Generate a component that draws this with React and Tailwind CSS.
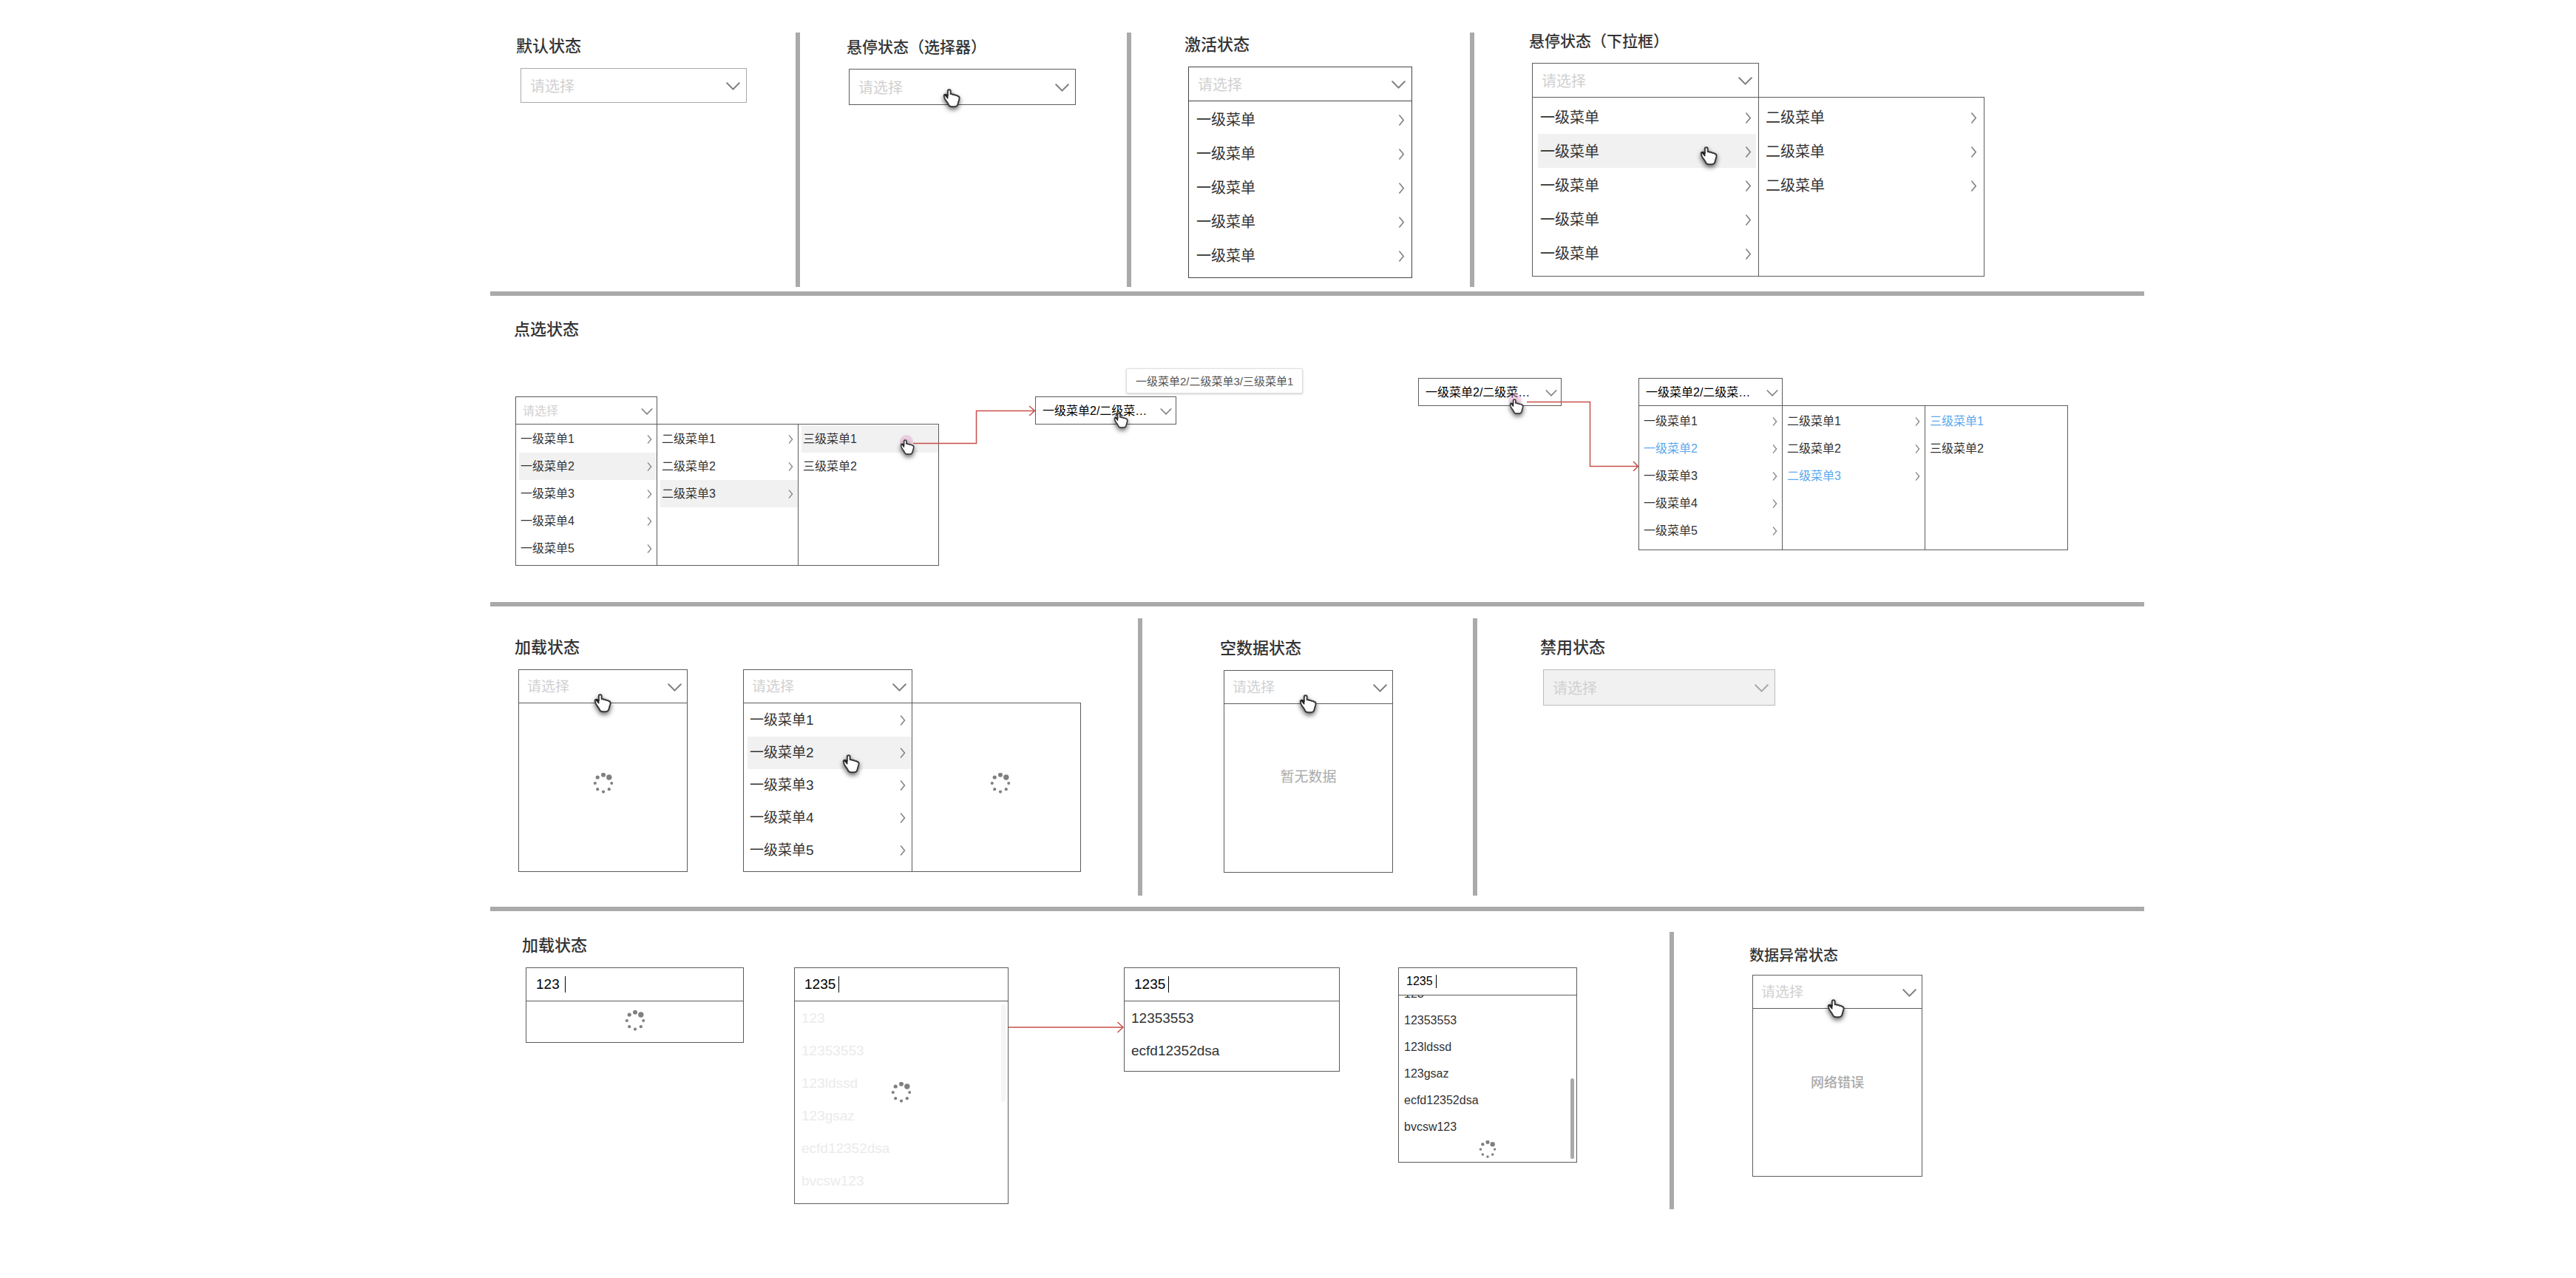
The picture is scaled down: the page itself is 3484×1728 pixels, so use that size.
import React from "react";

const SIZES = {
  lg: {
    trigger: "pt-[2px] pl-3 pr-2 text-[20px]",
    chevron: "w-[19px] h-[11px]",
    item: "h-[46px] ml-[7px] mr-[3px] pt-[2px] pl-[3px] pr-[6px] text-[20px]",
    arrow: "w-[9px] h-[15px]",
    hand: "w-[24px] h-[30px]",
  },
  md: {
    trigger: "pt-[2px] pl-[11px] pr-[7px] text-[19px]",
    chevron: "w-[19px] h-[11px]",
    item: "h-[44px] ml-[5px] pl-[3px] pr-2 text-[19px]",
    arrow: "w-[8px] h-[14px]",
    hand: "w-[24px] h-[30px]",
  },
  sm: {
    trigger: "pt-[2px] pl-[9px] pr-[5px] text-[16px]",
    chevron: "w-[16px] h-[9px]",
    item: "h-[37px] ml-[4px] pl-[2px] pr-[6px] text-[16px]",
    arrow: "w-[7px] h-[12px]",
    hand: "w-[20px] h-[25px]",
  },
};

function Chevron({ className }) {
  return (
    <svg viewBox="0 0 19 11" className={`shrink-0 ${className}`} fill="none" stroke="currentColor" strokeWidth="2" strokeLinecap="round" aria-hidden="true">
      <path d="M1.2 1.2 9.5 9.6 17.8 1.2" />
    </svg>
  );
}

function Arrow({ className }) {
  return (
    <svg viewBox="0 0 8 14" className={`shrink-0 text-[#808080] ${className}`} fill="none" stroke="currentColor" strokeWidth="1.5" strokeLinecap="round" aria-hidden="true">
      <path d="M1.500 1 6.500 7 1.500 13" />
    </svg>
  );
}

function Hand({ size = "lg", className }) {
  return (
    <svg viewBox="0 0 24 30" className={`pointer-events-none absolute z-10 overflow-visible drop-shadow-[0_3px_3px_rgba(0,0,0,0.6)] ${SIZES[size].hand} ${className}`} aria-hidden="true">
      <path
        d="M6.800 9V3.400C6.800 2 7.600 1.200 8.700 1.200s2 .8 2 2.200v3.800c1.200-.3 2.300 0 2.900.8 1.300-.3 2.500 0 3.200.8 1.300-.2 2.500.1 3.300.9 1.600.4 2.600 1.300 2.500 3-.1 2.200-1.300 4.300-1.800 7-.4 2.900-1.900 4.500-4.800 4.500h-3.400c-2.700 0-4.300-1.200-5-3.300-.8-2.300-3.400-4.500-4.700-7.300-.9-2-1.700-3.800-1-5 .9-1.400 3.300-1.200 4.900.4z"
        fill="#fff"
        stroke="#3a3a3a"
        strokeWidth="2"
        strokeLinejoin="round"
      />
      <path d="M2.800 8.400 6.800 8.600V13C5.600 11.400 4.400 9.600 2.800 8.400z" fill="#222" stroke="#222" strokeWidth="1.200" strokeLinejoin="round" />
    </svg>
  );
}

const DOTS = [
  [14, 2.7, 3],
  [21.8, 6, 3.7],
  [25.2, 14, 2],
  [21.8, 22.2, 2.1],
  [14, 25.6, 2.1],
  [6.2, 22.2, 2.1],
  [2.8, 14, 2.1],
  [6.2, 6, 2.6],
];

function Spinner({ className = "w-[28px] h-[28px]" }) {
  return (
    <svg viewBox="0 0 28 28" className={`shrink-0 ${className}`} fill="#808080" role="img" aria-label="加载中">
      {DOTS.map(([x, y, r]) => (
        <circle key={`${x}-${y}`} cx={x} cy={y} r={r} />
      ))}
    </svg>
  );
}

function TapDot({ className }) {
  return <span className={`pointer-events-none absolute size-[18px] rounded-full bg-[#e08fc0]/35 ${className}`} />;
}

function Title({ className = "mb-[18px] text-[22px]", children }) {
  return <h2 className={`mt-px leading-[22px] font-medium whitespace-nowrap text-[#333] ${className}`}>{children}</h2>;
}

function Trigger({ size = "lg", value, className, disabled, tone = "border-[#5c5c5c]" }) {
  const s = SIZES[size];
  return (
    <button
      type="button"
      disabled={disabled}
      aria-haspopup="listbox"
      className={`flex items-center justify-between border whitespace-nowrap ${tone} ${s.trigger} ${value ? "text-black" : "text-[#d0d0d0]"} ${disabled ? "bg-[#f1f1f1]" : "bg-white"} ${className}`}
    >
      <span>{value || "请选择"}</span>
      <Chevron className={`${s.chevron} ${disabled ? "text-[#a8a8a8]" : "text-[#808080]"}`} />
    </button>
  );
}

function Column({ size, items, active = -1, mode = "hover", leaf, className = "" }) {
  const s = SIZES[size];
  return (
    <ul className={className}>
      {items.map((label, i) => {
        const on = i === active;
        const look = on && mode === "selected" ? "text-[#5aa9ee]" : on ? "bg-[#f1f1f1] text-[#333]" : "text-[#333]";
        return (
          <li key={i} className="flex">
            <button type="button" className={`flex flex-1 items-center justify-between whitespace-nowrap ${s.item} ${look}`}>
              <span>{label}</span>
              {!leaf && <Arrow className={s.arrow} />}
            </button>
          </li>
        );
      })}
    </ul>
  );
}

function SearchField({ label, value, size = "md", caret = "ml-[4px]" }) {
  const small = size === "sm";
  return (
    <label className={`flex items-center border border-[#5c5c5c] bg-white text-black ${small ? "h-[38px] pl-[10px] text-[16px]" : "h-[46px] pl-[13px] text-[19px]"}`}>
      <input aria-label={label} defaultValue={value} className="field-sizing-content min-w-0 bg-transparent outline-none" />
      <span className={`w-px bg-black ${caret} ${small ? "h-[18px]" : "h-[22px]"}`} />
    </label>
  );
}

function Results({ items, className, row = "h-[44px] pl-[9px] text-[19px]" }) {
  return (
    <ul className={className}>
      {items.map((t) => (
        <li key={t} className="flex">
          <button type="button" className={`flex-1 text-left ${row}`}>{t}</button>
        </li>
      ))}
    </ul>
  );
}

const Rule = () => <hr className="h-[6px] border-0 bg-[#aaa]" />;
const Bar = ({ className = "" }) => <div className={`bg-[#aaa] ${className}`} />;

const five = ["一级菜单1", "一级菜单2", "一级菜单3", "一级菜单4", "一级菜单5"];
const second = ["二级菜单1", "二级菜单2", "二级菜单3"];
const third = ["三级菜单1", "三级菜单2"];
const plain = Array(5).fill("一级菜单");
const found = ["123", "12353553", "123ldssd", "123gsaz", "ecfd12352dsa", "bvcsw123"];

export default function App() {
  return (
    <main
      className="min-h-screen bg-white pt-11 pr-[584px] pl-[663px] text-[#333]"
      style={{ fontFamily: '"Liberation Sans", "Noto Sans CJK SC", sans-serif' }}
    >
      <section className="grid grid-cols-[413fr_6px_442fr_6px_458fr_6px_906fr]">
        <div className="pt-[7px] pl-[35px]">
          <Title>默认状态</Title>
          <Trigger tone="border-[#aaa]" className="ml-[6px] h-[47px] w-[306px]" />
        </div>
        <Bar />
        <div className="pt-2 pl-[63px]">
          <Title className="mb-[18px] text-[21px]">悬停状态（选择器）</Title>
          <div className="relative ml-[3px] w-[307px]">
            <Trigger className="h-[49px] w-full" />
            <Hand className="top-[27px] left-[127px]" />
          </div>
        </div>
        <Bar />
        <div className="pt-[5px] pl-[72px]">
          <Title>激活状态</Title>
          <div className="ml-[5px] w-[303px]">
            <Trigger tone="border-[#444]" className="h-[47px] w-full" />
            <div className="-mt-px border border-[#444] pt-px pb-[7px]">
              <Column size="lg" items={plain} />
            </div>
          </div>
        </div>
        <Bar />
        <div className="pb-[14px] pl-[74px]">
          <Title className="mb-[18px] text-[21px]">悬停状态（下拉框）</Title>
          <div className="relative ml-[4px] w-[612px]">
            <Trigger className="h-[47px] w-[307px]" />
            <div className="-mt-px flex border border-[#5c5c5c]">
              <Column size="lg" items={plain} active={1} className="w-[306px] border-r border-[#5c5c5c] pt-[3px] pb-2" />
              <Column size="lg" items={Array(3).fill("二级菜单")} className="-ml-px flex-1 pt-[3px]" />
            </div>
            <Hand className="top-[113px] left-[227px]" />
          </div>
        </div>
      </section>

      <div className="pt-[6px]">
        <Rule />
      </div>

      <section className="pt-[34px] pb-[49px]">
        <Title className="mb-[54px] pl-[32px] text-[22px]">点选状态</Title>
        <div className="flex items-start justify-between pr-[103px] pl-[34px]">
          <div className="relative mt-[25px] flex items-start gap-[130px]">
            <div className="w-[573px]">
              <Trigger size="sm" className="h-[38px] w-[192px]" />
              <div className="-mt-px flex border border-[#5c5c5c]">
                <Column size="sm" items={five} active={1} className="w-[191px] border-r border-[#5c5c5c] pt-px pb-1" />
                <Column size="sm" items={second} active={2} className="w-[191px] border-r border-[#5c5c5c] pt-px" />
                <Column size="sm" items={third} active={0} leaf className="flex-1 pt-px" />
              </div>
            </div>
            <TapDot className="top-[52px] left-[520px]" />
            <svg viewBox="0 0 166 60" className="absolute top-[12px] left-[538px] h-[60px] w-[166px]" fill="none" stroke="#c8504a" strokeWidth="1.5" aria-hidden="true">
              <path d="M0 51.500H85.500V7.500H164M157 1 164.500 7.500 157 14" />
            </svg>
            <Hand size="sm" className="top-[58px] left-[520px]" />
            <div className="relative w-[191px]">
              <Trigger size="sm" value="一级菜单2/二级菜…" className="h-[38px] w-full" />
              <Hand size="sm" className="top-[22px] left-[106px]" />
              <div role="tooltip" className="absolute bottom-[42px] left-[123px] rounded-[2px] border border-[#e0e0e0] bg-white px-3 pt-[6px] pb-[4px] text-[15px] leading-[22px] whitespace-nowrap text-[#555] shadow-[0_1px_3px_rgba(0,0,0,0.2)]">
                一级菜单2/二级菜单3/三级菜单1
              </div>
            </div>
          </div>
          <div className="relative flex items-start gap-[104px]">
            <div className="relative w-[194px]">
              <Trigger size="sm" value="一级菜单2/二级菜…" className="h-[38px] w-full" />
              <TapDot className="top-[21px] left-[122px]" />
              <Hand size="sm" className="top-[28px] left-[123px]" />
            </div>
            <svg viewBox="0 0 152 101" className="absolute top-[25px] left-[147px] h-[101px] w-[152px]" fill="none" stroke="#c8504a" strokeWidth="1.5" aria-hidden="true">
              <path d="M0 7.500H85.500V94.500H150M144 88 150.500 94.500 144 101" />
            </svg>
            <div className="w-[581px]">
              <Trigger size="sm" value="一级菜单2/二级菜…" className="h-[38px] w-[195px]" />
              <div className="-mt-px flex border border-[#5c5c5c]">
                <Column size="sm" mode="selected" items={five} active={1} className="w-[194px] border-r border-[#5c5c5c] pt-[2px] pb-[7px]" />
                <Column size="sm" mode="selected" items={second} active={2} className="w-[193px] border-r border-[#5c5c5c] pt-[2px]" />
                <Column size="sm" mode="selected" items={third} active={0} leaf className="flex-1 pt-[2px]" />
              </div>
            </div>
          </div>
        </div>
      </section>

      <Rule />

      <section className="grid grid-cols-[876fr_6px_447fr_6px_902fr] pt-4 pb-[15px]">
        <div className="pt-7 pb-8 pl-[33px]">
          <Title>加载状态</Title>
          <div className="ml-[5px] flex gap-[75px]">
            <div className="relative flex w-[229px] flex-col">
              <Trigger size="md" className="h-[46px] w-full" />
              <div className="-mt-px flex flex-1 items-center justify-center border border-[#5c5c5c] pb-3">
                <Spinner />
              </div>
              <Hand size="md" className="top-[33px] left-[102px]" />
            </div>
            <div className="relative w-[457px]">
              <Trigger size="md" className="h-[46px] w-[229px]" />
              <div className="-mt-px flex border border-[#5c5c5c]">
                <Column size="md" items={five} active={1} className="w-[228px] border-r border-[#5c5c5c] pt-px pb-[6px]" />
                <div className="flex flex-1 items-center justify-center pb-3 pl-[11px]">
                  <Spinner />
                </div>
              </div>
              <Hand size="md" className="top-[115px] left-[134px]" />
            </div>
          </div>
        </div>
        <Bar />
        <div className="pt-[29px] pl-[105px]">
          <Title>空数据状态</Title>
          <div className="relative ml-[5px] w-[229px]">
            <Trigger size="md" className="h-[46px] w-full" />
            <div className="-mt-px flex h-[229px] items-center justify-center border border-[#5c5c5c] pb-[28px] text-[19px] text-[#aaa]">暂无数据</div>
            <Hand size="md" className="top-[33px] left-[102px]" />
          </div>
        </div>
        <Bar />
        <div className="pt-7 pl-[85px]">
          <Title>禁用状态</Title>
          <Trigger disabled tone="border-[#bbb]" className="ml-[4px] h-[49px] w-[314px]" />
        </div>
      </section>

      <Rule />

      <section className="grid grid-cols-[1595fr_6px_636fr]">
        <div className="pt-[35px] pl-[43px]">
          <Title>加载状态</Title>
          <div className="ml-[5px] flex items-start">
            <div className="w-[295px]">
              <SearchField label="搜索" value="123" caret="ml-[7px]" />
              <div className="-mt-px flex h-[57px] items-center justify-center border border-[#5c5c5c] pb-1">
                <Spinner />
              </div>
            </div>
            <div className="relative ml-[68px] w-[290px]">
              <SearchField label="搜索" value="1235" />
              <div className="relative -mt-px border border-[#5c5c5c]">
                <Results items={found} className="pt-px pb-2 text-[#ebebeb]" />
                <div className="absolute inset-0 flex items-center justify-center pb-7">
                  <Spinner />
                </div>
                <span className="absolute top-1 right-[3px] h-[132px] w-[6px] rounded-full bg-[#f5f5f5]" />
              </div>
            </div>
            <svg viewBox="0 0 156 16" className="mt-[73px] h-[16px] w-[156px]" fill="none" stroke="#c8504a" strokeWidth="1.5" aria-hidden="true">
              <path d="M0 8H154M147.500 1 155 8 147.500 15" />
            </svg>
            <div className="w-[292px]">
              <SearchField label="搜索" value="1235" />
              <div className="-mt-px border border-[#5c5c5c]">
                <Results items={["12353553", "ecfd12352dsa"]} className="pt-px pb-[5px]" />
              </div>
            </div>
            <div className="ml-[79px] w-[242px]">
              <SearchField size="sm" label="搜索" value="1235" />
              <div className="relative -mt-px overflow-hidden border border-[#5c5c5c] pb-[5px]">
                <Results items={found} row="h-[36px] pl-[7px] text-[16px]" className="-mt-5" />
                <div className="flex justify-center">
                  <Spinner className="h-[24px] w-[24px]" />
                </div>
                <span className="absolute right-[3px] bottom-1 h-[109px] w-[5px] rounded-full bg-[#aaa]" />
              </div>
            </div>
          </div>
        </div>
        <Bar className="mt-7 h-[375px]" />
        <div className="pt-12 pl-[102px]">
          <Title className="mb-[15px] text-[20px]">数据异常状态</Title>
          <div className="relative ml-[4px] w-[230px]">
            <Trigger size="md" className="h-[46px] w-full" />
            <div className="-mt-px flex h-[228px] items-center justify-center border border-[#5c5c5c] pb-[26px] text-[18px] font-medium text-[#aaa]">网络错误</div>
            <Hand size="md" className="top-[33px] left-[101px]" />
          </div>
        </div>
      </section>
    </main>
  );
}
